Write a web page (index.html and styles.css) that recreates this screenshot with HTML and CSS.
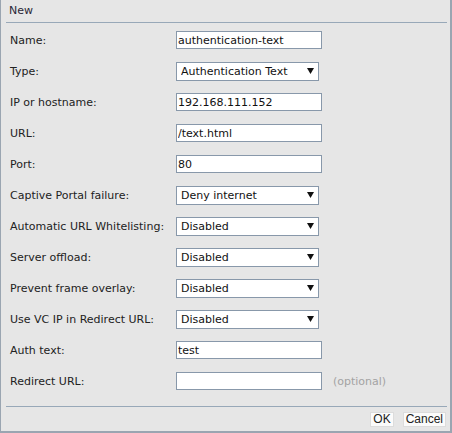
FILE: index.html
```html
<!DOCTYPE html>
<html>
<head>
<meta charset="utf-8">
<link rel="stylesheet" href="styles.css">
</head>
<body>
<div class="panel">
  <div class="header">New</div>
  <div class="form">
    <div class="row"><span class="label">Name:</span><input class="text" value="authentication-text"></div>
    <div class="row"><span class="label">Type:</span><div class="sel"><select><option>Authentication Text</option></select><svg class="arrow" width="7" height="6" viewBox="0 0 7 6"><polygon points="0,0 7,0 3.5,6" fill="#111"/></svg></div></div>
    <div class="row"><span class="label">IP or hostname:</span><input class="text" value="192.168.111.152"></div>
    <div class="row"><span class="label">URL:</span><input class="text" value="/text.html"></div>
    <div class="row"><span class="label">Port:</span><input class="text" value="80"></div>
    <div class="row"><span class="label">Captive Portal failure:</span><div class="sel"><select><option>Deny internet</option></select><svg class="arrow" width="7" height="6" viewBox="0 0 7 6"><polygon points="0,0 7,0 3.5,6" fill="#111"/></svg></div></div>
    <div class="row"><span class="label">Automatic URL Whitelisting:</span><div class="sel"><select><option>Disabled</option></select><svg class="arrow" width="7" height="6" viewBox="0 0 7 6"><polygon points="0,0 7,0 3.5,6" fill="#111"/></svg></div></div>
    <div class="row"><span class="label">Server offload:</span><div class="sel"><select><option>Disabled</option></select><svg class="arrow" width="7" height="6" viewBox="0 0 7 6"><polygon points="0,0 7,0 3.5,6" fill="#111"/></svg></div></div>
    <div class="row"><span class="label">Prevent frame overlay:</span><div class="sel"><select><option>Disabled</option></select><svg class="arrow" width="7" height="6" viewBox="0 0 7 6"><polygon points="0,0 7,0 3.5,6" fill="#111"/></svg></div></div>
    <div class="row"><span class="label">Use VC IP in Redirect URL:</span><div class="sel"><select><option>Disabled</option></select><svg class="arrow" width="7" height="6" viewBox="0 0 7 6"><polygon points="0,0 7,0 3.5,6" fill="#111"/></svg></div></div>
    <div class="row"><span class="label">Auth text:</span><input class="text" value="test"></div>
    <div class="row"><span class="label">Redirect URL:</span><input class="text" value=""><span class="hint">(optional)</span></div>
  </div>
  <div class="footer">
    <button class="btn">OK</button>
    <button class="btn">Cancel</button>
  </div>
</div>
</body>
</html>
```
FILE: styles.css
```css
html, body {
  margin: 0;
  padding: 0;
  background: #e6e6e6;
}
.panel {
  box-sizing: border-box;
  width: 452px;
  height: 433px;
  background: #e6e6e6;
  border-left: 1px solid #9aa5b1;
  border-right: 2px solid #9aa5b1;
  border-bottom: 2px solid #9aa5b1;
  font-family: "DejaVu Sans", Verdana, sans-serif;
  font-size: 11px;
  color: #222;
  padding: 0 3px 0 5px;
}
.header {
  height: 23px;
  line-height: 22px;
  padding-left: 3px;
  border-bottom: 1px solid #98a8b8;
  box-sizing: border-box;
  color: #2a2636;
}
.form {
  padding-top: 8px;
  display: flex;
  flex-direction: column;
  gap: 13px;
  height: 383px;
  box-sizing: border-box;
}
.row {
  display: flex;
  align-items: center;
  height: 18px;
}
.label {
  width: 170px;
  padding-left: 4px;
  box-sizing: border-box;
}
.text {
  box-sizing: border-box;
  width: 146px;
  height: 18px;
  border: 1px solid #8898aa;
  background: #fff;
  font-family: inherit;
  font-size: 11px;
  color: #111;
  padding: 0 0 0 1px;
  margin: 0;
  outline: none;
}
.sel {
  position: relative;
  width: 143px;
  height: 19px;
}
.sel select {
  appearance: none;
  -webkit-appearance: none;
  box-sizing: border-box;
  width: 143px;
  height: 19px;
  border: 1px solid #8898aa;
  border-radius: 0;
  background: #fff;
  font-family: inherit;
  font-size: 11px;
  color: #111;
  padding: 0 0 0 4px;
  margin: 0;
}
.arrow {
  position: absolute;
  left: 131px;
  top: 6px;
}
.hint {
  margin-left: 11px;
  color: #a3a3a3;
}
.footer {
  border-top: 1px solid #98a8b8;
  display: flex;
  justify-content: flex-end;
  gap: 9px;
  padding-top: 5px;
  padding-right: 1px;
}
.btn {
  font-family: "Liberation Sans", Arial, sans-serif;
  font-size: 12px;
  height: 15px;
  padding: 0 2px;
  margin: 0;
  border: 1px solid #dcdcdc;
  background: #fbfbfb;
  color: #222;
  line-height: 13px;
}
```
